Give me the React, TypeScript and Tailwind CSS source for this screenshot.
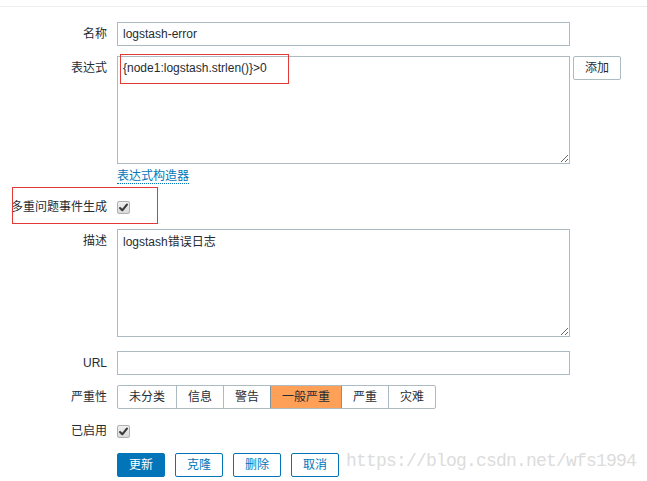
import React from "react";

const font = { fontFamily: '"Liberation Sans", Arial, "Noto Sans CJK SC", sans-serif' };

function Check() {
  return (
    <span className="inline-flex h-[13px] w-[13px] items-center justify-center rounded-[2px] border border-[#b0b0b0] bg-gradient-to-b from-[#f0f0f0] to-[#dadada]">
      <svg width="11" height="11" viewBox="0 0 11 11">
        <path d="M2 6 L4.3 8.3 L9 2.5" fill="none" stroke="#3a3a3a" strokeWidth="2" strokeLinecap="round" strokeLinejoin="round" />
      </svg>
    </span>
  );
}

function Label({ children }: { children: React.ReactNode }) {
  return (
    <div className="w-[107px] shrink-0 whitespace-nowrap text-right text-[12px] leading-[24px] text-[#1f2c33]">
      {children}
    </div>
  );
}

const sev = [
  { t: "未分类", cls: "border-l-0" },
  { t: "信息", cls: "border-l border-[#acbbc2]" },
  { t: "警告", cls: "border-l border-[#acbbc2]" },
  { t: "一般严重", cls: "border-l border-[#7f939e] bg-[#ffa059]" },
  { t: "严重", cls: "border-l border-[#7f939e]" },
  { t: "灾难", cls: "border-l border-[#acbbc2]" },
];

export default function App() {
  return (
    <div className="relative h-[481px] w-[647px] overflow-hidden bg-white text-[12px] text-[#1f2c33]" style={font}>
      <div className="h-[6px]" />
      <div className="border-t border-[#ebeef0]" />

      <div className="flex flex-col pt-[15px]">
        {/* 名称 */}
        <div className="flex">
          <Label>名称</Label>
          <div className="ml-[10px]">
            <div className="h-[24px] w-[453px] border border-[#acbbc2] px-[5px] leading-[22px]">logstash-error</div>
          </div>
        </div>

        {/* 表达式 */}
        <div className="mt-[10px] flex">
          <Label>表达式</Label>
          <div className="ml-[10px] flex items-start">
            <textarea
              readOnly
              defaultValue="{node1:logstash.strlen()}>0"
              className="block h-[108px] w-[453px] resize border border-[#acbbc2] px-[5px] pt-[4px] text-[12px] leading-[14px] text-[#1f2c33] outline-none"
              style={font}
            />
            <div className="ml-[3px] flex h-[24px] w-[48px] items-center justify-center rounded-[2px] border border-[#acbbc2] bg-white text-[12px] text-[#1f2c33]">
              添加
            </div>
          </div>
        </div>

        {/* link */}
        <div className="mt-[5px] flex">
          <div className="w-[107px] shrink-0" />
          <div className="ml-[10px]">
            <span className="block h-[15px] border-b border-dotted border-[#0275b8] leading-[14px] text-[#0275b8]">表达式构造器</span>
          </div>
        </div>

        {/* 多重问题事件生成 */}
        <div className="mt-[11px] flex">
          <Label>多重问题事件生成</Label>
          <div className="ml-[10px] flex h-[24px] items-center">
            <Check />
          </div>
        </div>

        {/* 描述 */}
        <div className="mt-[10px] flex">
          <Label>描述</Label>
          <div className="ml-[10px]">
            <textarea
              readOnly
              defaultValue="logstash错误日志"
              className="block h-[108px] w-[453px] resize border border-[#acbbc2] px-[5px] pt-[5px] text-[12px] leading-[14px] text-[#1f2c33] outline-none"
              style={font}
            />
          </div>
        </div>

        {/* URL */}
        <div className="mt-[14px] flex">
          <Label>URL</Label>
          <div className="ml-[10px]">
            <div className="h-[24px] w-[453px] border border-[#acbbc2]" />
          </div>
        </div>

        {/* 严重性 */}
        <div className="mt-[10px] flex">
          <Label>严重性</Label>
          <div className="ml-[10px]">
            <div className="flex h-[24px] rounded-[2px] border border-[#acbbc2]">
              {sev.map((s) => (
                <div key={s.t} className={`flex items-center px-[11px] leading-[22px] ${s.cls}`}>
                  {s.t}
                </div>
              ))}
            </div>
          </div>
        </div>

        {/* 已启用 */}
        <div className="mt-[10px] flex">
          <Label>已启用</Label>
          <div className="ml-[10px] flex h-[24px] items-center">
            <Check />
          </div>
        </div>

        {/* buttons */}
        <div className="mt-[10px] flex">
          <div className="w-[107px] shrink-0" />
          <div className="ml-[10px] flex gap-[10px]">
            <div className="flex h-[24px] w-[48px] items-center justify-center rounded-[2px] border border-[#0275b8] bg-[#0275b8] text-white">更新</div>
            <div className="flex h-[24px] w-[48px] items-center justify-center rounded-[2px] border border-[#0275b8] bg-white text-[#0275b8]">克隆</div>
            <div className="flex h-[24px] w-[48px] items-center justify-center rounded-[2px] border border-[#0275b8] bg-white text-[#0275b8]">删除</div>
            <div className="flex h-[24px] w-[48px] items-center justify-center rounded-[2px] border border-[#0275b8] bg-white text-[#0275b8]">取消</div>
          </div>
        </div>
      </div>

      {/* annotations */}
      <div className="pointer-events-none absolute left-[120px] top-[54px] h-[30px] w-[169px] border border-[#e53935]" />
      <div className="pointer-events-none absolute left-[12px] top-[187px] h-[37px] w-[146px] border border-[#e53935]" />

      {/* watermark */}
      <div
        className="pointer-events-none absolute left-[346px] top-[451px] whitespace-nowrap text-[18px] leading-[20px] tracking-[-0.8px] text-[#dcdcdc]"
        style={{ fontFamily: '"Liberation Mono", monospace' }}
      >
        https://blog.csdn.net/wfs1994
      </div>
    </div>
  );
}
